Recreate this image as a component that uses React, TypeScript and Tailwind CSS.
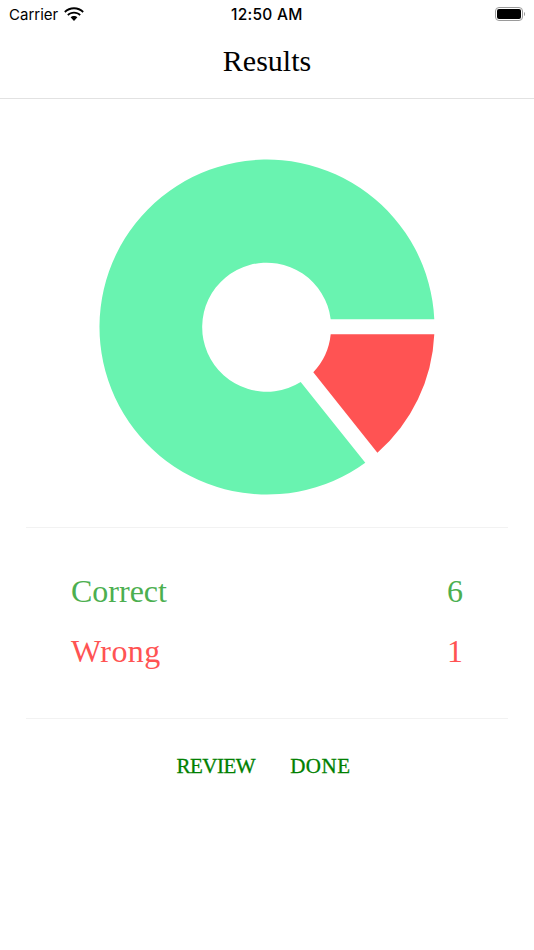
export default function App() {
  return (
    <div className="w-[534px] h-[950px] bg-white flex flex-col overflow-hidden font-['Liberation_Serif',serif]">
      <div className="h-[28px] flex items-center justify-between pl-[9px] pr-[8px] relative font-['Inter',sans-serif] text-black">
        <div className="flex items-center gap-[6px]">
          <span className="text-[15px] leading-none">Carrier</span>
          <svg width="20" height="15" viewBox="0 0 20 15">
            <path d="M10 2.200c3.300 0 6.300 1.300 8.600 3.500l1.200-1.400C17.200 1.800 13.800.3 10 .3S2.800 1.800.2 4.300l1.200 1.400C3.700 3.500 6.700 2.200 10 2.200z" fill="#000" />
            <path d="M10 6.600c2.100 0 4 .8 5.500 2.200l1.300-1.400C15 5.700 12.600 4.700 10 4.700S5 5.700 3.200 7.400l1.300 1.400C6 7.400 7.900 6.600 10 6.600z" fill="#000" />
            <path d="M10 9c-1.300 0-2.500.5-3.400 1.300L10 14l3.400-3.700C12.500 9.500 11.300 9 10 9z" fill="#000" />
          </svg>
        </div>
        <span className="absolute left-[231px] pt-[1px] text-[15.5px] tracking-[0.25px] font-medium leading-none">12:50 AM</span>
        <svg width="31" height="14" viewBox="0 0 31 14">
          <rect x="0.5" y="0.5" width="27" height="13" rx="3.5" fill="none" stroke="#9a9a9a" />
          <rect x="2" y="2" width="24" height="10" rx="2" fill="#000" />
          <path d="M29 5v4c.7-.2 1-1 1-2s-.3-1.800-1-2z" fill="#9a9a9a" />
        </svg>
      </div>
      <div className="h-[71px] flex items-center justify-center border-b border-[#e2e2e2] text-[30px] text-black pb-[5px]">
        Results
      </div>
      <div className="flex justify-center pt-[60px]">
        <svg width="336" height="336" viewBox="99 159 336 336">
          <path
            d="M434.300 319.300A167.500 167.500 0 1 0 365.300 462.700L300.700 382A64.500 64.500 0 1 1 330.700 319.300Z"
            fill="#69f3b0"
          />
          <path
            d="M330.700 334.300H434.300A167.500 167.500 0 0 1 377.400 452.800L313.300 372.300A64.500 64.500 0 0 0 330.700 334.300Z"
            fill="#ff5353"
          />
        </svg>
      </div>
      <div className="mt-[32px] mx-[26px] h-[192px] border-y border-[#f2f2f2] flex flex-col pt-[33px] px-[45px] text-[32px] leading-[60px]">
        <div className="flex justify-between text-[#4caf50]">
          <span>Correct</span>
          <span>6</span>
        </div>
        <div className="flex justify-between text-[#ff5353]">
          <span className="tracking-[0.4px]">Wrong</span>
          <span>1</span>
        </div>
      </div>
      <div className="flex justify-center gap-[35px] pt-[33px] pr-[7px] text-[21px] leading-[28px] text-[#008000] [-webkit-text-stroke:0.3px_#008000]">
        <span className="tracking-[-0.5px]">REVIEW</span>
        <span className="tracking-[0.5px]">DONE</span>
      </div>
    </div>
  );
}
